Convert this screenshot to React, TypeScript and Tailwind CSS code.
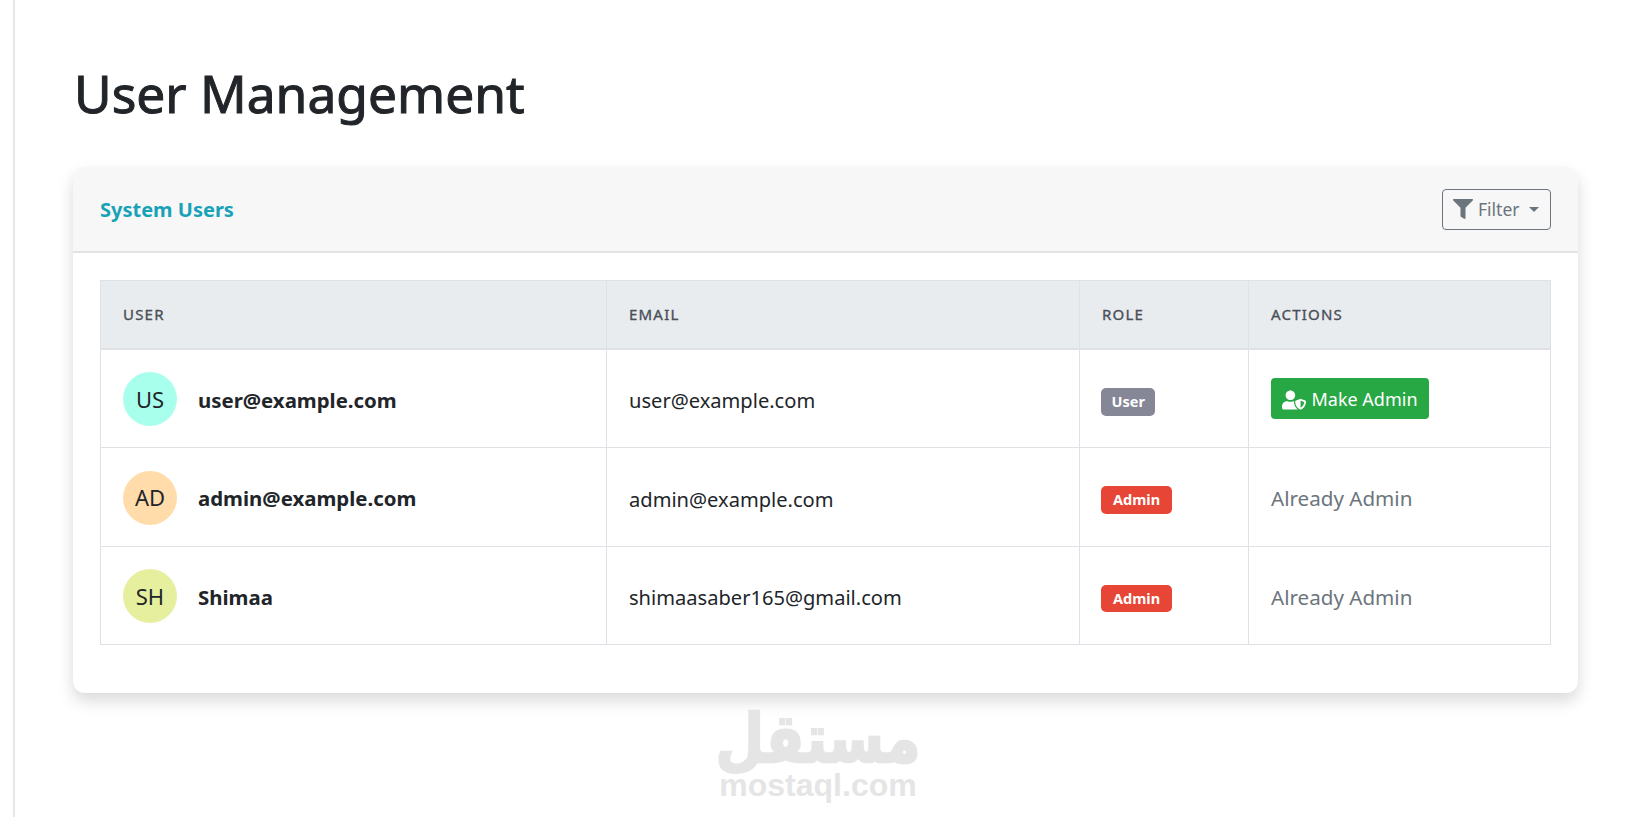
import { FaFilter, FaUserShield } from "react-icons/fa";

interface UserRow {
    initials: string;
    avatar: string;
    height: string;
    name: string;
    email: string;
    admin: boolean;
}

const users: UserRow[] = [
    { initials: "US", avatar: "bg-[#a8ffeb]", height: "h-[99px]", name: "user@example.com", email: "user@example.com", admin: false },
    { initials: "AD", avatar: "bg-[#ffdcaa]", height: "h-[98.5px]", name: "admin@example.com", email: "admin@example.com", admin: true },
    { initials: "SH", avatar: "bg-[#e6ef9e]", height: "h-[98px]", name: "Shimaa", email: "shimaasaber165@gmail.com", admin: true },
];

const headers = ["USER", "EMAIL", "ROLE", "ACTIONS"];

export default function App() {
    return (
        <div className="relative h-[817px] overflow-hidden bg-white font-['Noto_Sans',sans-serif] text-[#212529]">
            <div className="ml-[13px] h-full border-l-2 border-[#e6e6e6] pl-[58px]">
                <h1 className="pt-[59px] pl-[1px] text-[51.5px] leading-[68px] font-normal text-[#212529] [-webkit-text-stroke:1px_#212529]">User Management</h1>

                {/* Card */}
                <div className="mt-[40px] w-[1505px] rounded-xl bg-white shadow-[0_8px_16px_rgba(0,0,0,0.15)]">
                    <div className="flex h-[86px] items-center justify-between rounded-t-xl border-b-2 border-[#e2e3e5] bg-[#f7f7f7] px-[27px]">
                        <h2 className="mt-[2px] text-[20px] font-bold text-[#17a2b8]">System Users</h2>
                        <button className="flex h-[41px] w-[109px] items-center rounded border border-[#6c757d] pl-[10px] text-[17.5px] text-[#6c757d]">
                            <FaFilter className="text-[20px]" />
                            <span className="ml-[5px]">Filter</span>
                            <span className="ml-[9px] h-0 w-0 border-x-[5px] border-t-[5px] border-x-transparent border-t-[#6c757d]" />
                        </button>
                    </div>

                    <div className="px-[27px] pt-[27px] pb-[48px]">
                        <table className="w-[1450px] table-fixed border-collapse">
                            <colgroup>
                                <col className="w-[506px]" />
                                <col className="w-[473px]" />
                                <col className="w-[169px]" />
                                <col className="w-[302px]" />
                            </colgroup>
                            <thead>
                                <tr className="h-[68px] bg-[#e9ecef]">
                                    {headers.map((h) => (
                                        <th
                                            key={h}
                                            className="border border-b-2 border-[#dee2e6] px-[22px] text-left text-[15px] font-normal tracking-[1.2px] text-[#495057] [-webkit-text-stroke:0.35px_#495057]"
                                        >
                                            {h}
                                        </th>
                                    ))}
                                </tr>
                            </thead>
                            <tbody>
                                {users.map((u) => (
                                    <tr key={u.initials} className={u.height}>
                                        <td className="border border-[#dee2e6] px-[22px] pt-[2px]">
                                            <div className="flex items-center gap-[21px]">
                                                <div className={`flex h-[54px] w-[54px] items-center justify-center rounded-full text-[22px] ${u.avatar}`}>
                                                    {u.initials}
                                                </div>
                                                <span className="mt-[2px] text-[20.4px] font-bold">{u.name}</span>
                                            </div>
                                        </td>
                                        <td className="border border-[#dee2e6] px-[22px] pt-[6px] text-[20.1px]">{u.email}</td>
                                        <td className="border border-[#dee2e6] px-[21px]">
                                            {u.admin ? (
                                                <span className="mt-[7px] inline-block rounded-[5px] bg-[#e74536] px-[12px] py-[3px] text-[14.5px] font-bold text-white">Admin</span>
                                            ) : (
                                                <span className="mt-[7px] inline-block rounded-[5px] bg-[#858796] px-[10.5px] py-[3px] text-[14.5px] font-bold text-white">User</span>
                                            )}
                                        </td>
                                        <td className="border border-[#dee2e6] px-[22px] pt-[4px]">
                                            {u.admin ? (
                                                <span className="text-[20.6px] text-[#6c757d]">Already Admin</span>
                                            ) : (
                                                <button className="-mt-[3px] flex h-[41px] w-[158px] items-center justify-center gap-[5px] rounded bg-[#28a745] pt-[2px] text-[18px] text-white">
                                                    <FaUserShield className="text-[24px]" />
                                                    Make Admin
                                                </button>
                                            )}
                                        </td>
                                    </tr>
                                ))}
                            </tbody>
                        </table>
                    </div>
                </div>
            </div>

            {/* Watermark */}
            <div className="absolute top-[703px] left-[718px] flex w-[200px] flex-col items-center text-[#e5e5e5]">
                <span dir="rtl" className="h-[68px] origin-center scale-y-[1.2] font-['DejaVu_Sans',sans-serif] text-[56px] leading-[72px] font-bold [-webkit-text-stroke:2px_#e5e5e5]">مستقل</span>
                <span className="font-['Liberation_Sans',sans-serif] text-[32px] leading-[28px] font-bold">mostaql.com</span>
            </div>
        </div>
    );
}
